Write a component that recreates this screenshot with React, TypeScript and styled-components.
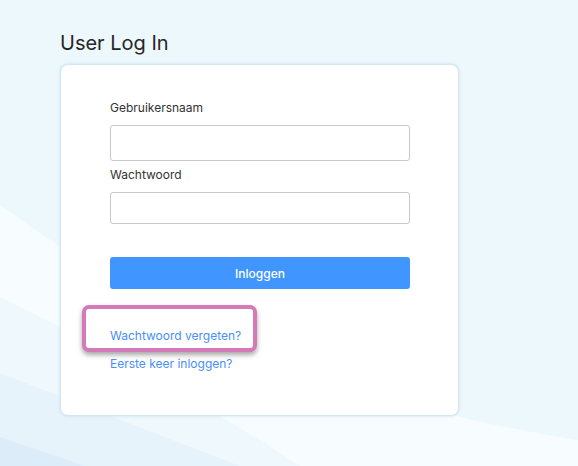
import React from "react";
import styled, { createGlobalStyle } from "styled-components";

const GlobalStyle = createGlobalStyle`
  html, body {
    margin: 0;
    padding: 0;
    background: #edf8fd;
  }
  body {
    font-family: Inter, "Noto Sans", sans-serif;
    color: #2b2b2b;
  }
`;

const Page = styled.div`
  position: relative;
  width: 578px;
  height: 466px;
  overflow: hidden;
  background: #edf8fd;
`;

const Waves = styled.svg`
  position: absolute;
  left: 0;
  top: 0;
  width: 578px;
  height: 466px;
`;

const Content = styled.div`
  position: relative;
  display: flex;
  flex-direction: column;
  padding: 30px 0 0 60px;
`;

const Title = styled.h1`
  margin: 0 0 7px;
  font-size: 20px;
  font-weight: 400;
  line-height: 27px;
  color: #262626;
`;

const Card = styled.div`
  box-sizing: border-box;
  width: 399px;
  background: #fff;
  border: 1px solid #d5e7f4;
  border-radius: 8px;
  box-shadow: 0 0 3px rgba(160, 200, 230, 0.55);
  padding: 34px 48px 45px 49px;
  display: flex;
  flex-direction: column;
`;

const Label = styled.label`
  font-size: 12px;
  line-height: 18px;
  color: #333;
  margin-bottom: 8px;
`;

const Input = styled.input<{ $h: number }>`
  box-sizing: border-box;
  width: 300px;
  height: ${p => p.$h}px;
  border: 1px solid #c9c9c9;
  border-radius: 3px;
  background: #fff;
  margin: 0 0 5px;
  outline: none;
`;

const Submit = styled.button`
  width: 300px;
  height: 32px;
  margin-top: 28px;
  border: none;
  border-radius: 3px;
  background: #4096fe;
  color: #fff;
  font-family: Inter, "Noto Sans", sans-serif;
  font-size: 12px;
  font-weight: 500;
`;

const Links = styled.div`
  display: flex;
  flex-direction: column;
  gap: 10px;
  margin-top: 35px;
`;

const LinkRow = styled.div`
  position: relative;
  height: 18px;
`;

const Highlight = styled.div`
  position: absolute;
  left: -28px;
  top: -19px;
  width: 175px;
  height: 47px;
  box-sizing: border-box;
  border: 4px solid #d57ab8;
  border-radius: 7px;
  background: #fff;
  box-shadow: 0 3px 5px rgba(0, 0, 0, 0.35);
`;

const TextLink = styled.a`
  position: relative;
  display: inline-block;
  font-size: 12px;
  line-height: 18px;
  color: #4a8ef6;
  text-decoration: none;
`;

export default function App() {
  return (
    <Page>
      <GlobalStyle />
      <Waves viewBox="0 0 578 466">
        <path d="M0 205 Q250 390 578 440 L578 466 L0 466 Z" fill="#f6fcff" />
        <path d="M0 297 Q160 375 300 466 L0 466 Z" fill="#eff8fc" />
        <path d="M0 373 Q120 420 240 466 L0 466 Z" fill="#e6f3fa" />
        <path d="M0 437 L85 466 L0 466 Z" fill="#dcedf9" />
      </Waves>
      <Content>
        <Title>User Log In</Title>
        <Card>
          <Label>Gebruikersnaam</Label>
          <Input $h={36} type="text" />
          <Label>Wachtwoord</Label>
          <Input $h={32} type="password" />
          <Submit>Inloggen</Submit>
          <Links>
            <LinkRow>
              <Highlight />
              <TextLink href="#">Wachtwoord vergeten?</TextLink>
            </LinkRow>
            <LinkRow>
              <TextLink href="#">Eerste keer inloggen?</TextLink>
            </LinkRow>
          </Links>
        </Card>
      </Content>
    </Page>
  );
}
